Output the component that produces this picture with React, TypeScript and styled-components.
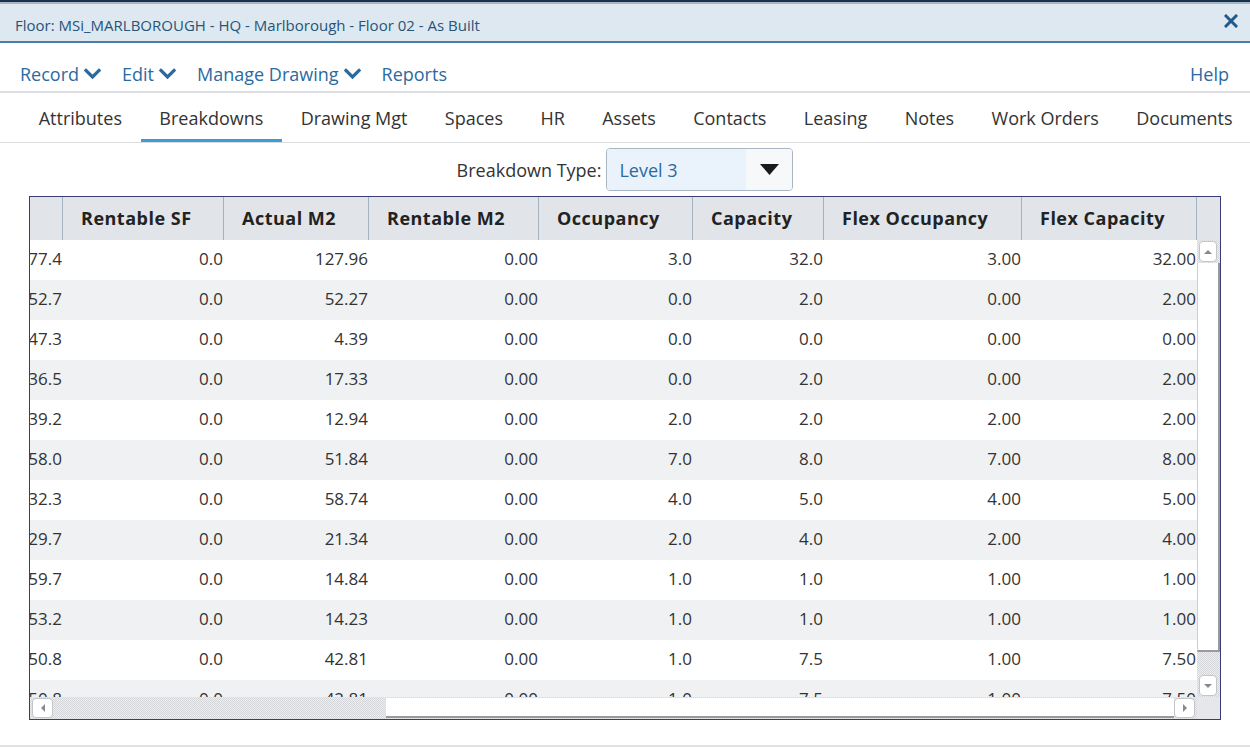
import styled, { createGlobalStyle } from "styled-components";

const GlobalStyle = createGlobalStyle`
  html, body {
    margin: 0;
    padding: 0;
    background: #fff;
  }
  body {
    font-family: "Open Sans", "Noto Sans", sans-serif;
  }
`;

const Page = styled.div`
  width: 1250px;
  height: 747px;
  display: flex;
  flex-direction: column;
  overflow: hidden;
  background: #fff;
`;

const TitleBar = styled.div`
  height: 43px;
  box-sizing: border-box;
  border-top: 2px solid #17324b;
  border-bottom: 2px solid #4a7eaa;
  box-shadow: inset 0 2px 0 #a9b5c0;
  background: #dde8f1;
  display: flex;
  align-items: center;
  justify-content: space-between;
  padding: 6px 12px 0 15px;
`;

const Title = styled.span`
  font-size: 15px;
  color: #285478;
`;

const CloseButton = styled.span`
  display: flex;
  color: #1f5a8c;
  margin-top: -7px;
`;

const MenuBar = styled.div`
  height: 50px;
  box-sizing: border-box;
  border-bottom: 2px solid #dedee2;
  display: flex;
  align-items: flex-end;
  padding: 0 21px 5px 20px;
  gap: 21px;
`;

const MenuItem = styled.span`
  display: flex;
  align-items: center;
  gap: 5px;
  font-size: 18px;
  line-height: 24px;
  color: #2b6a9f;
`;

const MenuSpacer = styled.div`
  flex: 1;
`;

const TabBar = styled.div`
  height: 50px;
  box-sizing: border-box;
  border-bottom: 1px solid #dcdcdf;
  display: flex;
  padding-left: 20px;
`;

const Tab = styled.div<{ $active?: boolean }>`
  height: 49px;
  box-sizing: border-box;
  padding: 4px 18.7px 0;
  display: flex;
  align-items: center;
  font-size: 18px;
  color: #333;
  white-space: nowrap;
  border-bottom: 3px solid ${(p) => (p.$active ? "#3d9bd6" : "transparent")};
`;

const Toolbar = styled.div`
  height: 53px;
  display: flex;
  align-items: center;
  justify-content: center;
  gap: 5px;
`;

const FieldLabel = styled.span`
  font-size: 18px;
  color: #333;
`;

const Select = styled.div`
  width: 187px;
  height: 43px;
  box-sizing: border-box;
  border: 1px solid #aab7c3;
  border-radius: 4px;
  overflow: hidden;
  display: flex;
`;

const SelectValue = styled.div`
  flex: 1;
  background: #eaf3fb;
  padding-left: 12px;
  display: flex;
  align-items: center;
  font-size: 18px;
  color: #2b6a9f;
`;

const SelectArrow = styled.div`
  width: 46px;
  background: #f6f8fa;
  display: flex;
  align-items: center;
  justify-content: center;
`;

const COLS = "33px 161px 145px 170px 154px 131px 198px 175px";

const Grid = styled.div`
  margin: 0 29px;
  height: 524px;
  box-sizing: border-box;
  border: 1px solid #3b3b78;
  display: grid;
  grid-template-columns: 1167px 23px;
  grid-template-rows: 43px 457px 22px;
`;

const HeaderRow = styled.div`
  display: grid;
  grid-template-columns: ${COLS};
`;

const HeaderCell = styled.div`
  background: #e1e5ea;
  border-right: 1px solid #a3b2c1;
  box-sizing: border-box;
  padding: 0 0 2px 18px;
  display: flex;
  align-items: center;
  font-size: 18px;
  font-weight: 700;
  color: #222;
  white-space: nowrap;
  letter-spacing: 0.5px;
  overflow: hidden;
`;

const HeaderCorner = styled.div`
  background: #e1e5ea;
`;

const Body = styled.div`
  overflow: hidden;
`;

const Row = styled.div<{ $alt: boolean }>`
  display: grid;
  grid-template-columns: ${COLS};
  height: 40px;
  background: ${(p) => (p.$alt ? "#f0f1f3" : "#fff")};
`;

const Cell = styled.div`
  display: flex;
  justify-content: flex-end;
  align-items: center;
  overflow: hidden;
  white-space: nowrap;
  padding: 0 1px 3px 0;
  font-size: 17px;
  color: #333;
`;

const hatch = `repeating-conic-gradient(#d6d7da 0 25%, #eceded 0 50%) 0 0 / 2px 2px`;

const VScroll = styled.div`
  display: flex;
  flex-direction: column;
  background: ${hatch};
`;

const ScrollButton = styled.div`
  box-sizing: border-box;
  background: #fff;
  border: 1px solid #c6c6c9;
  border-radius: 4px;
  display: flex;
  align-items: center;
  justify-content: center;
`;

const VButton = styled(ScrollButton)`
  height: 21px;
  margin: 1px 3px 1px 2px;
`;

const VThumb = styled.div`
  flex: 1;
  background: #fff;
  border-left: 1px solid #cfcfd2;
  border-right: 2px solid #9a9a9d;
  border-bottom: 2px solid #9a9a9d;
  margin-bottom: 22px;
`;

const HScroll = styled.div`
  display: flex;
  align-items: stretch;
  padding: 1px 2px 1px 2px;
  background: ${hatch};
`;

const HButton = styled(ScrollButton)`
  width: 21px;
`;

const HThumb = styled.div`
  flex: 1;
  margin-left: 333px;
  background: #fff;
  border-bottom: 2px solid #9a9a9d;
`;

const Corner = styled.div`
  background: #e6e7ea;
`;

const FooterRule = styled.div`
  margin-top: auto;
  height: 2px;
  background: #e2e2e4;
`;

const Chevron = () => (
  <svg width="17" height="12" viewBox="0 0 17 12">
    <polyline
      points="2,2.5 8.5,9 15,2.5"
      fill="none"
      stroke="#2b6a9f"
      strokeWidth="3.2"
      strokeLinecap="square"
    />
  </svg>
);

const Arrow = ({ dir }: { dir: "up" | "down" | "left" | "right" }) => {
  const pts = {
    up: "0,5 4,1 8,5",
    down: "0,1 8,1 4,5",
    left: "5,0 5,8 1,4",
    right: "1,0 1,8 5,4",
  }[dir];
  const horiz = dir === "left" || dir === "right";
  return (
    <svg width={horiz ? 6 : 8} height={horiz ? 8 : 6} viewBox={horiz ? "0 0 6 8" : "0 0 8 6"}>
      <polygon points={pts} fill="#8a8a8e" />
    </svg>
  );
};

const menus = ["Record", "Edit", "Manage Drawing"];

const tabs = [
  "Attributes",
  "Breakdowns",
  "Drawing Mgt",
  "Spaces",
  "HR",
  "Assets",
  "Contacts",
  "Leasing",
  "Notes",
  "Work Orders",
  "Documents",
];

const headers = [
  "",
  "Rentable SF",
  "Actual M2",
  "Rentable M2",
  "Occupancy",
  "Capacity",
  "Flex Occupancy",
  "Flex Capacity",
];

const rows = [
  ["77.4", "0.0", "127.96", "0.00", "3.0", "32.0", "3.00", "32.00"],
  ["52.7", "0.0", "52.27", "0.00", "0.0", "2.0", "0.00", "2.00"],
  ["47.3", "0.0", "4.39", "0.00", "0.0", "0.0", "0.00", "0.00"],
  ["36.5", "0.0", "17.33", "0.00", "0.0", "2.0", "0.00", "2.00"],
  ["39.2", "0.0", "12.94", "0.00", "2.0", "2.0", "2.00", "2.00"],
  ["58.0", "0.0", "51.84", "0.00", "7.0", "8.0", "7.00", "8.00"],
  ["32.3", "0.0", "58.74", "0.00", "4.0", "5.0", "4.00", "5.00"],
  ["29.7", "0.0", "21.34", "0.00", "2.0", "4.0", "2.00", "4.00"],
  ["59.7", "0.0", "14.84", "0.00", "1.0", "1.0", "1.00", "1.00"],
  ["53.2", "0.0", "14.23", "0.00", "1.0", "1.0", "1.00", "1.00"],
  ["50.8", "0.0", "42.81", "0.00", "1.0", "7.5", "1.00", "7.50"],
  ["50.8", "0.0", "42.81", "0.00", "1.0", "7.5", "1.00", "7.50"],
];

export default function App() {
  return (
    <Page>
      <GlobalStyle />
      <TitleBar>
        <Title>Floor: MSi_MARLBOROUGH - HQ - Marlborough - Floor 02 - As Built</Title>
        <CloseButton>
          <svg width="14" height="14" viewBox="0 0 14 14">
            <path d="M2 2 L12 12 M12 2 L2 12" stroke="currentColor" strokeWidth="3" strokeLinecap="square" />
          </svg>
        </CloseButton>
      </TitleBar>

      <MenuBar>
        {menus.map((m) => (
          <MenuItem key={m}>
            {m}
            <Chevron />
          </MenuItem>
        ))}
        <MenuItem>Reports</MenuItem>
        <MenuSpacer />
        <MenuItem>Help</MenuItem>
      </MenuBar>

      <TabBar>
        {tabs.map((t) => (
          <Tab key={t} $active={t === "Breakdowns"}>
            {t}
          </Tab>
        ))}
      </TabBar>

      <Toolbar>
        <FieldLabel>Breakdown Type:</FieldLabel>
        <Select>
          <SelectValue>Level 3</SelectValue>
          <SelectArrow>
            <svg width="19" height="11" viewBox="0 0 19 11">
              <polygon points="0,0 19,0 9.5,11" fill="#1a1a1a" />
            </svg>
          </SelectArrow>
        </Select>
      </Toolbar>

      <Grid>
        <HeaderRow>
          {headers.map((h, i) => (
            <HeaderCell key={i}>{h}</HeaderCell>
          ))}
        </HeaderRow>
        <HeaderCorner />

        <Body>
          {rows.map((r, i) => (
            <Row key={i} $alt={i % 2 === 1}>
              {r.map((v, j) => (
                <Cell key={j}>{v}</Cell>
              ))}
            </Row>
          ))}
        </Body>
        <VScroll>
          <VButton>
            <Arrow dir="up" />
          </VButton>
          <VThumb />
          <VButton>
            <Arrow dir="down" />
          </VButton>
        </VScroll>

        <HScroll>
          <HButton>
            <Arrow dir="left" />
          </HButton>
          <HThumb />
          <HButton>
            <Arrow dir="right" />
          </HButton>
        </HScroll>
        <Corner />
      </Grid>

      <FooterRule />
    </Page>
  );
}
